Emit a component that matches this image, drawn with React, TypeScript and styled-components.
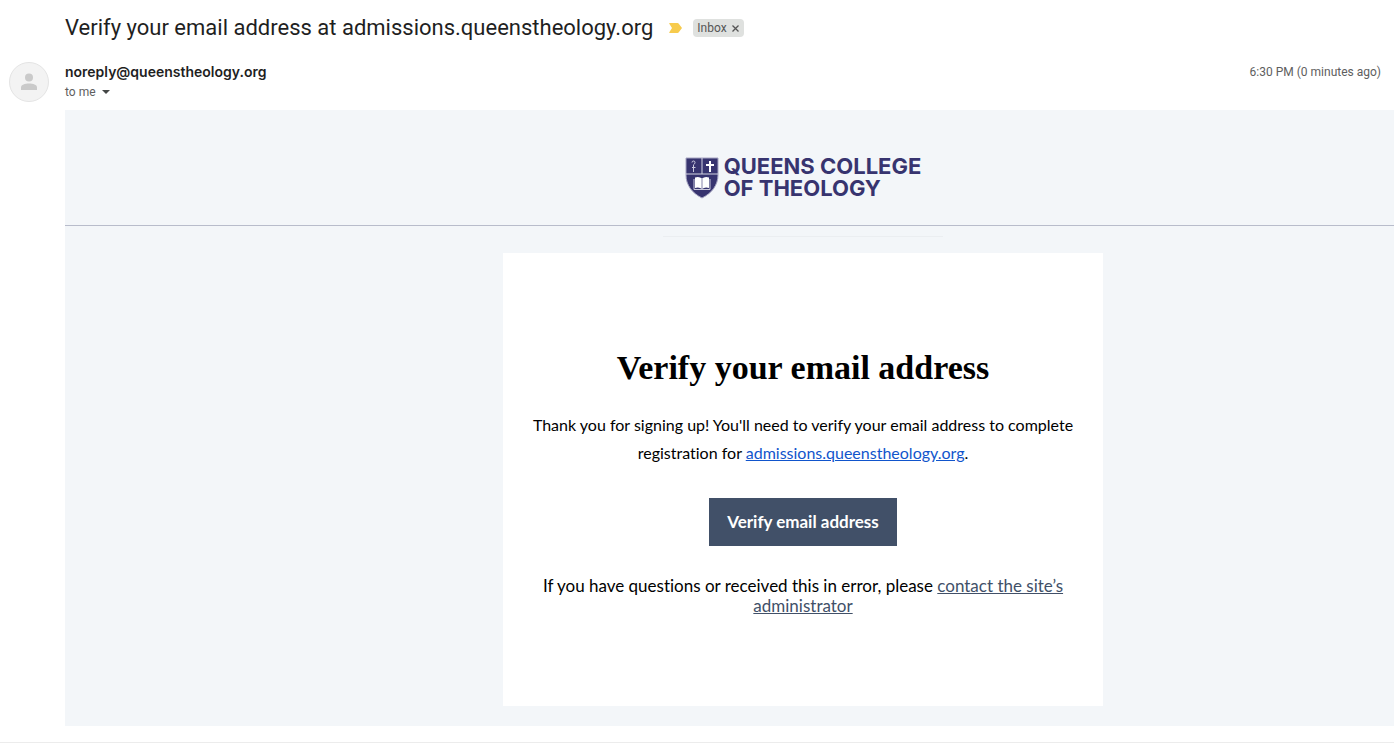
import React from "react";
import styled, { createGlobalStyle } from "styled-components";

const ui = `"Google Sans", Roboto, "Liberation Sans", sans-serif`;
const humanist = `"Trebuchet MS", Lato, "Liberation Sans", sans-serif`;

const GlobalStyle = createGlobalStyle`
  *, *::before, *::after { box-sizing: border-box; }
  body { margin: 0; background: #fff; color: #1f1f1f; font-family: ${ui}; }
  h1, h2, p { margin: 0; }
`;

const Page = styled.main`
  min-height: 100vh;
  display: flex;
  flex-direction: column;
`;

const SubjectRow = styled.header`
  display: flex;
  align-items: center;
  height: 56px;
  padding-left: 65px;
`;

const Subject = styled.h1`
  font-size: 22px;
  line-height: 28px;
  font-weight: 400;
`;

const Marker = styled.svg`
  margin-left: 16px;
`;

const Label = styled.span`
  display: flex;
  align-items: center;
  gap: 4px;
  height: 18px;
  margin-left: 11px;
  padding: 0 4px;
  border-radius: 4px;
  background: #dfe1df;
  color: #555;
  font-size: 12px;
  line-height: 18px;
`;

const LabelRemove = styled.button`
  display: flex;
  padding: 1px 0 0;
  border: 0;
  background: none;
  color: inherit;
`;

const SenderRow = styled.section`
  display: flex;
  height: 54px;
  padding: 6px 13px 0 9px;
`;

const Avatar = styled.div`
  display: flex;
  align-items: center;
  justify-content: center;
  width: 40px;
  height: 40px;
  border: 1px solid #e4e4e4;
  border-radius: 50%;
  background: #f3f3f3;
`;

const Sender = styled.div`
  flex: 1;
  margin-left: 16px;
`;

const SenderName = styled.p`
  font-family: Inter, sans-serif;
  font-size: 14px;
  line-height: 20px;
  font-weight: 600;
`;

const Recipient = styled.button`
  display: flex;
  align-items: center;
  gap: 6px;
  padding: 0;
  border: 0;
  background: none;
  color: #5e5e5e;
  font-family: ${ui};
  font-size: 12px;
  line-height: 20px;
`;

const Time = styled.time`
  color: #5e5e5e;
  font-size: 12px;
  line-height: 20px;
`;

const Message = styled.article`
  margin-left: 65px;
  padding-bottom: 20px;
  background: #f3f6f9;
`;

const Banner = styled.div`
  display: flex;
  justify-content: center;
  height: 116px;
  padding: 45px 0 0 147px;
  border-bottom: 1px solid #b8bccb;
`;

const Brand = styled.div`
  display: flex;
  align-items: center;
  gap: 5px;
  height: 46px;
  color: #37346f;
`;

const BrandName = styled.p`
  height: 46px;
  font-family: Inter, sans-serif;
  font-size: 22px;
  line-height: 22px;
  font-weight: 700;
`;

const Content = styled.div`
  display: flex;
  flex-direction: column;
  align-items: center;
  padding: 10px 0 0 147px;
`;

const Divider = styled.hr`
  width: 280px;
  margin: 0 0 16px;
  border: 0;
  border-top: 1px solid #ebeef1;
`;

const Card = styled.section`
  display: flex;
  flex-direction: column;
  align-items: center;
  width: 100%;
  max-width: 600px;
  padding: 97px 20px 90px;
  background: #fff;
  color: #000;
  font-family: ${humanist};
  font-variant-ligatures: none;
  text-align: center;
`;

const CardTitle = styled.h2`
  font-family: Georgia, "Liberation Serif", serif;
  font-size: 34px;
  line-height: 36px;
  font-weight: 700;
`;

const Intro = styled.p`
  margin-top: 25px;
  font-size: 16px;
  line-height: 28px;
`;

const SiteLink = styled.a`
  color: #1155cc;
`;

const VerifyButton = styled.button`
  height: 48px;
  margin-top: 31px;
  padding: 0 18px 2px;
  border: 0;
  background: #415068;
  color: #fff;
  font-family: ${humanist};
  font-size: 17px;
  font-weight: 700;
`;

const Help = styled.p`
  margin-top: 30px;
  font-size: 17px;
  line-height: 20px;
`;

const HelpLink = styled.a`
  color: #415068;
`;

const Footer = styled.footer`
  margin-top: 16px;
  border-top: 1px solid #ececec;
`;

function Shield() {
  return (
    <svg width="34" height="42" viewBox="0 0 34 42" aria-hidden="true">
      <path d="M1 1H33V18C33 28 27 36 17 41C7 36 1 28 1 18Z" fill="#37346f" stroke="#a6a5c2" />
      <path d="M1 17H33M17 1V17" stroke="#d4d4e3" strokeWidth="1" />
      <path d="M25 4V15M21 8H29" stroke="#fff" strokeWidth="2" />
      <path d="M8.500 8V15M7 10.500H10.500M7 5.500Q7 4 8.500 4T10 5.500T8.500 7.500" fill="none" stroke="#c9c8dc" />
      <path d="M10 20.500Q14 19 17 21.500Q20 19 24 20.500V31Q20 29.500 17 32Q14 29.500 10 31Z" fill="#fff" />
      <path d="M17 21.500V32" stroke="#8583aa" />
      <path d="M9 22V32.500H25V22" fill="none" stroke="#c9c8dc" />
    </svg>
  );
}

export default function App() {
  return (
    <>
      <GlobalStyle />
      <Page>
        <SubjectRow>
          <Subject>Verify your email address at admissions.queenstheology.org</Subject>
          <Marker width="13" height="10" viewBox="0 0 13 10" aria-hidden="true">
            <path d="M.6 0H8.500Q9.300 0 9.800.7L13 5L9.800 9.300Q9.300 10 8.500 10H.6Q0 10 .3 9.300L3 5L.3.700Q0 0 .6 0Z" fill="#f7cb4d" />
          </Marker>
          <Label>
            Inbox
            <LabelRemove aria-label="Remove label Inbox">
              <svg width="9" height="9" viewBox="0 0 9 9">
                <path d="M1.500 1.500L7.500 7.500M7.500 1.500L1.500 7.500" stroke="currentColor" strokeWidth="1.300" />
              </svg>
            </LabelRemove>
          </Label>
        </SubjectRow>
        <SenderRow>
          <Avatar>
            <svg width="16" height="18" viewBox="0 0 16 18" aria-hidden="true">
              <circle cx="8" cy="4.500" r="4" fill="#cacaca" />
              <path d="M0 17V14.500C0 11.500 4 10.500 8 10.500S16 11.500 16 14.500V17Z" fill="#cacaca" />
            </svg>
          </Avatar>
          <Sender>
            <SenderName>noreply@queenstheology.org</SenderName>
            <Recipient>
              to me
              <svg width="8" height="4" viewBox="0 0 8 4" aria-hidden="true">
                <path d="M0 0H8L4 4Z" fill="#444746" />
              </svg>
            </Recipient>
          </Sender>
          <Time>6:30 PM (0 minutes ago)</Time>
        </SenderRow>
        <Message>
          <Banner>
            <Brand>
              <Shield />
              <BrandName>
                QUEENS COLLEGE
                <br />
                OF THEOLOGY
              </BrandName>
            </Brand>
          </Banner>
          <Content>
            <Divider />
            <Card>
              <CardTitle>Verify your email address</CardTitle>
              <Intro>
                Thank you for signing up! You'll need to verify your email address to complete registration for{" "}
                <SiteLink href="#">admissions.queenstheology.org</SiteLink>.
              </Intro>
              <VerifyButton>Verify email address</VerifyButton>
              <Help>
                If you have questions or received this in error, please{" "}
                <HelpLink href="#">contact the site’s administrator</HelpLink>
              </Help>
            </Card>
          </Content>
        </Message>
        <Footer />
      </Page>
    </>
  );
}
